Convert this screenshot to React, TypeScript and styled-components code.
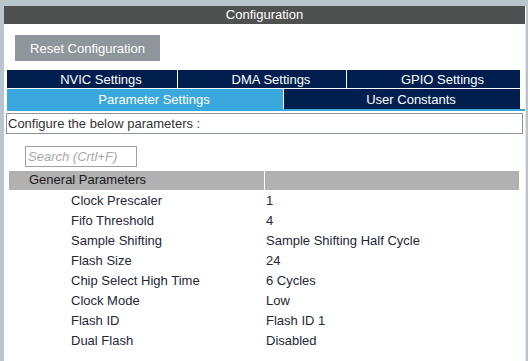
import React from 'react';
import styled, { createGlobalStyle } from 'styled-components';

const GlobalStyle = createGlobalStyle`
  html, body {
    margin: 0;
    padding: 0;
    background: #b9c5cd;
    font-family: "Liberation Sans", Arial, sans-serif;
  }
`;

interface IParam {
  label: string;
  value: string;
}

const params: IParam[] = [
  { label: "Clock Prescaler", value: "1" },
  { label: "Fifo Threshold", value: "4" },
  { label: "Sample Shifting", value: "Sample Shifting Half Cycle" },
  { label: "Flash Size", value: "24" },
  { label: "Chip Select High Time", value: "6 Cycles" },
  { label: "Clock Mode", value: "Low" },
  { label: "Flash ID", value: "Flash ID 1" },
  { label: "Dual Flash", value: "Disabled" },
];

export default function App() {
  return (
    <>
      <GlobalStyle />
      <Page>
        <Window>
          <TitleBar>Configuration</TitleBar>
          <Content>
            <Main>
              <ResetButton>Reset Configuration</ResetButton>
              <Tabs>
                <TabRow $cols="170px 168px 1fr">
                  <Tab>NVIC Settings</Tab>
                  <Tab>DMA Settings</Tab>
                  <Tab>GPIO Settings</Tab>
                </TabRow>
                <TabRow $cols="276px 1fr" $tall>
                  <Tab $active>Parameter Settings</Tab>
                  <Tab>User Constants</Tab>
                </TabRow>
              </Tabs>
              <TabUnderline />
              <InfoBox>Configure the below parameters :</InfoBox>
              <Search placeholder="Search (Crtl+F)" />
              <Table>
                <GroupHeader>
                  <GroupTitle>General Parameters</GroupTitle>
                  <GroupFill />
                </GroupHeader>
                {params.map((p) => (
                  <Row key={p.label}>
                    <Label>{p.label}</Label>
                    <Value>{p.value}</Value>
                  </Row>
                ))}
              </Table>
            </Main>
            <Scrollbar />
          </Content>
        </Window>
      </Page>
    </>
  );
}

const Page = styled.div`
  width: 528px;
  height: 361px;
  box-sizing: border-box;
  padding: 6px 2px 0 4px;
  overflow: hidden;
`;

const Window = styled.div`
  height: 355px;
  background: #ffffff;
  display: flex;
  flex-direction: column;
`;

const TitleBar = styled.div`
  height: 18px;
  background: #4f5050;
  color: #ffffff;
  font-size: 13px;
  line-height: 18px;
  text-align: center;
  margin-right: 1px;
`;

const Content = styled.div`
  flex: 1;
  display: flex;
`;

const Main = styled.div`
  flex: 1;
  display: flex;
  flex-direction: column;
  align-items: flex-start;
`;

const Scrollbar = styled.div`
  width: 3px;
  background: #e6e8ea;
`;

const ResetButton = styled.button`
  margin: 11px 0 0 11px;
  width: 145px;
  height: 26px;
  background: #8e959b;
  border: none;
  color: #ffffff;
  font-family: "Liberation Sans", Arial, sans-serif;
  font-size: 13px;
  padding: 0;
`;

const Tabs = styled.div`
  margin: 9px 0 0 3px;
  width: 513px;
  display: flex;
  flex-direction: column;
  gap: 1px;
  background: #ffffff;
`;

const TabRow = styled.div<{ $cols: string; $tall?: boolean }>`
  display: grid;
  grid-template-columns: ${(p) => p.$cols};
  gap: 1px;
  height: ${(p) => (p.$tall ? "20px" : "18px")};
`;

const Tab = styled.div<{ $active?: boolean }>`
  background: ${(p) => (p.$active ? "#3aa8dc" : "#001e4e")};
  color: #ffffff;
  font-size: 13px;
  display: flex;
  align-items: center;
  justify-content: center;
  padding-left: 18px;
`;

const TabUnderline = styled.div`
  margin-left: 3px;
  width: 518px;
  height: 2px;
  background: #3aa8dc;
`;

const InfoBox = styled.div`
  margin: 2px 0 0 2px;
  width: 517px;
  height: 21px;
  box-sizing: border-box;
  border: 1px solid #8c949a;
  font-size: 13px;
  line-height: 19px;
  padding-left: 1px;
  color: #333333;
`;

const Search = styled.input`
  margin: 12px 0 0 21px;
  width: 112px;
  height: 21px;
  box-sizing: border-box;
  border: 1px solid #a0a0a0;
  padding: 0 0 0 2px;
  font-family: "Liberation Sans", Arial, sans-serif;
  font-size: 13px;
  outline: none;

  &::placeholder {
    color: #a8a8a8;
    font-style: italic;
  }
`;

const Table = styled.div`
  margin: 4px 0 0 5px;
  width: 510px;
  display: flex;
  flex-direction: column;
`;

const GroupHeader = styled.div`
  display: grid;
  grid-template-columns: 255px 1fr;
  gap: 1px;
  height: 19px;
`;

const GroupTitle = styled.div`
  background: #b1b1b1;
  color: #1a1a1a;
  font-size: 13px;
  line-height: 18px;
  padding-left: 20px;
`;

const GroupFill = styled.div`
  background: #b1b1b1;
`;

const Row = styled.div`
  display: grid;
  grid-template-columns: 256px 1fr;
  height: 20px;
  align-items: center;
  font-size: 13px;
  color: #262637;
`;

const Label = styled.div`
  padding-left: 62px;
`;

const Value = styled.div`
  padding-left: 1px;
`;
